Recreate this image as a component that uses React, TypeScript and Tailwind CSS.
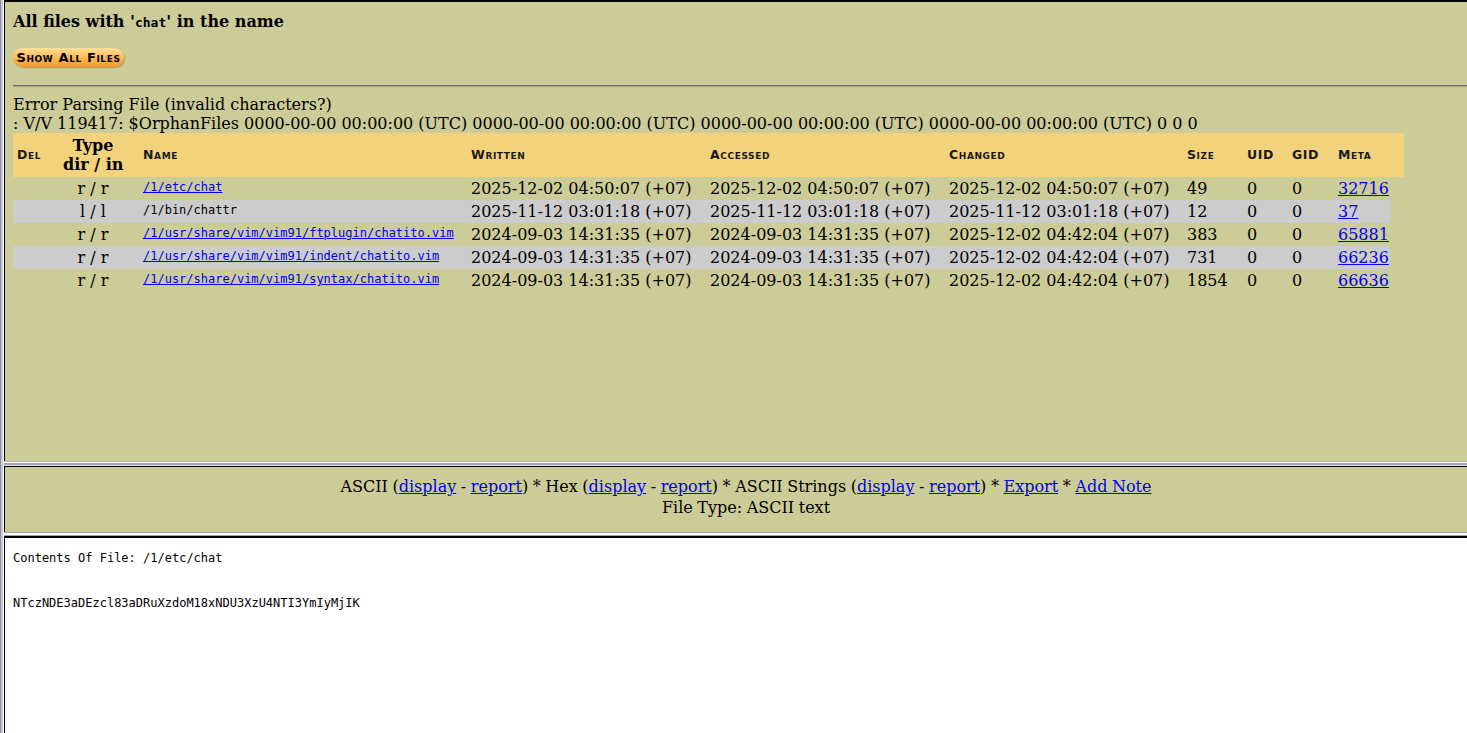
import React from 'react';

const serif = "font-['DejaVu_Serif','Liberation_Serif',serif]";
const mono = "font-['DejaVu_Sans_Mono','Liberation_Mono',monospace]";
const caps =
  "font-['DejaVu_Sans','Liberation_Sans',sans-serif] font-bold text-[12.5px] tracking-[0.6px] [font-variant:small-caps] text-[#1a1a1a]";

const cols =
  'grid grid-cols-[50px_60px_18px_328px_239px_239px_238px_60px_45px_46px_54px]';

type Row = {
  type: string;
  name: string;
  link: boolean;
  written: string;
  accessed: string;
  changed: string;
  size: string;
  meta: string;
};

const rows: Row[] = [
  {
    type: 'r / r',
    name: '/1/etc/chat',
    link: true,
    written: '2025-12-02 04:50:07 (+07)',
    accessed: '2025-12-02 04:50:07 (+07)',
    changed: '2025-12-02 04:50:07 (+07)',
    size: '49',
    meta: '32716',
  },
  {
    type: 'l / l',
    name: '/1/bin/chattr',
    link: false,
    written: '2025-11-12 03:01:18 (+07)',
    accessed: '2025-11-12 03:01:18 (+07)',
    changed: '2025-11-12 03:01:18 (+07)',
    size: '12',
    meta: '37',
  },
  {
    type: 'r / r',
    name: '/1/usr/share/vim/vim91/ftplugin/chatito.vim',
    link: true,
    written: '2024-09-03 14:31:35 (+07)',
    accessed: '2024-09-03 14:31:35 (+07)',
    changed: '2025-12-02 04:42:04 (+07)',
    size: '383',
    meta: '65881',
  },
  {
    type: 'r / r',
    name: '/1/usr/share/vim/vim91/indent/chatito.vim',
    link: true,
    written: '2024-09-03 14:31:35 (+07)',
    accessed: '2024-09-03 14:31:35 (+07)',
    changed: '2025-12-02 04:42:04 (+07)',
    size: '731',
    meta: '66236',
  },
  {
    type: 'r / r',
    name: '/1/usr/share/vim/vim91/syntax/chatito.vim',
    link: true,
    written: '2024-09-03 14:31:35 (+07)',
    accessed: '2024-09-03 14:31:35 (+07)',
    changed: '2025-12-02 04:42:04 (+07)',
    size: '1854',
    meta: '66636',
  },
];

const Link = ({ children }: { children: React.ReactNode }) => (
  <a href="#" className="text-[#0000ee] underline">
    {children}
  </a>
);

const FileTable = () => (
  <div className="w-[1391px]">
    {/* header row */}
    <div className={`flex h-[44px] items-center bg-[#f3d27c] ${caps}`}>
      <div className={`${cols} items-center`}>
        <div className="pl-[4px]">Del</div>
        <div
          className={`${serif} text-center text-[16px] leading-[19px] font-bold tracking-normal whitespace-nowrap [font-variant:normal] text-black`}
        >
          Type
          <br />
          dir / in
        </div>
        <div />
        <div className="pl-[2px]">Name</div>
        <div className="pl-[2px]">Written</div>
        <div className="pl-[2px]">Accessed</div>
        <div className="pl-[2px]">Changed</div>
        <div className="pl-[2px]">Size</div>
        <div className="pl-[2px]">UID</div>
        <div className="pl-[2px]">GID</div>
        <div className="pl-[2px]">Meta</div>
      </div>
    </div>

    {rows.map((r, i) => (
      <div
        key={r.name}
        className={`${cols} h-[23px] w-[1377px] items-center text-[16px] leading-[19px] text-black ${serif} ${
          i % 2 === 1 ? 'bg-[#cccccc]' : 'bg-[#cccc99]'
        }`}
      >
        <div />
        <div className="text-center">{r.type}</div>
        <div />
        <div className={`${mono} -mt-[3px] pl-[2px] text-[12px] leading-[14px]`}>
          {r.link ? <Link>{r.name}</Link> : r.name}
        </div>
        <div className="pl-[2px]">{r.written}</div>
        <div className="pl-[2px]">{r.accessed}</div>
        <div className="pl-[2px]">{r.changed}</div>
        <div className="pl-[2px]">{r.size}</div>
        <div className="pl-[2px]">0</div>
        <div className="pl-[2px]">0</div>
        <div className="pl-[2px]">
          <Link>{r.meta}</Link>
        </div>
      </div>
    ))}
  </div>
);

const ShowAllButton = () => (
  <div className="flex h-[19px] w-[111px] items-center justify-center rounded-full bg-gradient-to-b from-[#ffe09a] via-[#fbb955] to-[#f29a2c] shadow-[1px_1px_1px_rgba(150,90,0,0.45)]">
    <span className={`${caps} text-[13px] tracking-[0.1px] text-black`}>Show All Files</span>
  </div>
);

export default function App() {
  return (
    <div className="h-[733px] w-[1467px] overflow-hidden bg-white">
      <div className="flex h-full w-[1487px]">
        {/* frameset left edge */}
        <div className="w-px bg-[#8e8e9e]" />
        <div className="w-[2px] bg-[#c8c8d6]" />
        <div className="w-px bg-white" />

        <div className="flex flex-1 flex-col">
          {/* top frame */}
          <div className={`h-[461px] border-t-2 border-l border-black bg-[#cccc99] ${serif}`}>
            <div className="px-[8px] pt-[9px]">
              <div className="text-[16px] leading-[21px] font-bold text-black">
                All files with '<span className={`${mono} text-[13px]`}>chat</span>' in the name
              </div>
              <div className="mt-[15px]">
                <ShowAllButton />
              </div>
              <div className="mt-[18px] h-[2px] border-t border-[#6e6e6e] bg-[#a9a98a]" />
              <div className="mt-[8px] text-[16px] leading-[19px] text-black">
                Error Parsing File (invalid characters?)
                <br />: V/V 119417: $OrphanFiles 0000-00-00 00:00:00 (UTC) 0000-00-00 00:00:00 (UTC) 0000-00-00
                00:00:00 (UTC) 0000-00-00 00:00:00 (UTC) 0 0 0
              </div>
              <FileTable />
            </div>
          </div>

          {/* divider */}
          <div className="h-px bg-[#b4b4b4]" />
          <div className="h-px bg-white" />
          <div className="h-[2px] bg-[#a2a2b0]" />
          <div className="h-px bg-[#e6e6e6]" />

          {/* middle frame */}
          <div className={`h-[66px] border-t border-l border-black bg-[#cccc99] ${serif}`}>
            <div className="pt-[9px] text-center text-[16px] leading-[21px] text-black [word-spacing:-0.5px]">
              ASCII (<Link>display</Link> - <Link>report</Link>) * Hex (<Link>display</Link> -{' '}
              <Link>report</Link>) * ASCII Strings (<Link>display</Link> - <Link>report</Link>) *{' '}
              <Link>Export</Link> * <Link>Add Note</Link>
              <br />
              File Type: ASCII text
            </div>
          </div>

          {/* divider */}
          <div className="h-px bg-[#a2a2b0]" />
          <div className="h-[2px] bg-white" />
          <div className="h-px bg-[#a2a2b0]" />

          {/* bottom frame */}
          <div
            className={`flex-1 border-t-2 border-l border-black bg-white ${mono} text-[12px] leading-[14px] text-black`}
          >
            <div className="px-[8px] pt-[13px]">
              <div>Contents Of File: /1/etc/chat</div>
              <div className="mt-[31px] whitespace-pre">NTczNDE3aDEzcl83aDRuXzdoM18xNDU3XzU4NTI3YmIyMjIK</div>
            </div>
          </div>
        </div>
      </div>
    </div>
  );
}
